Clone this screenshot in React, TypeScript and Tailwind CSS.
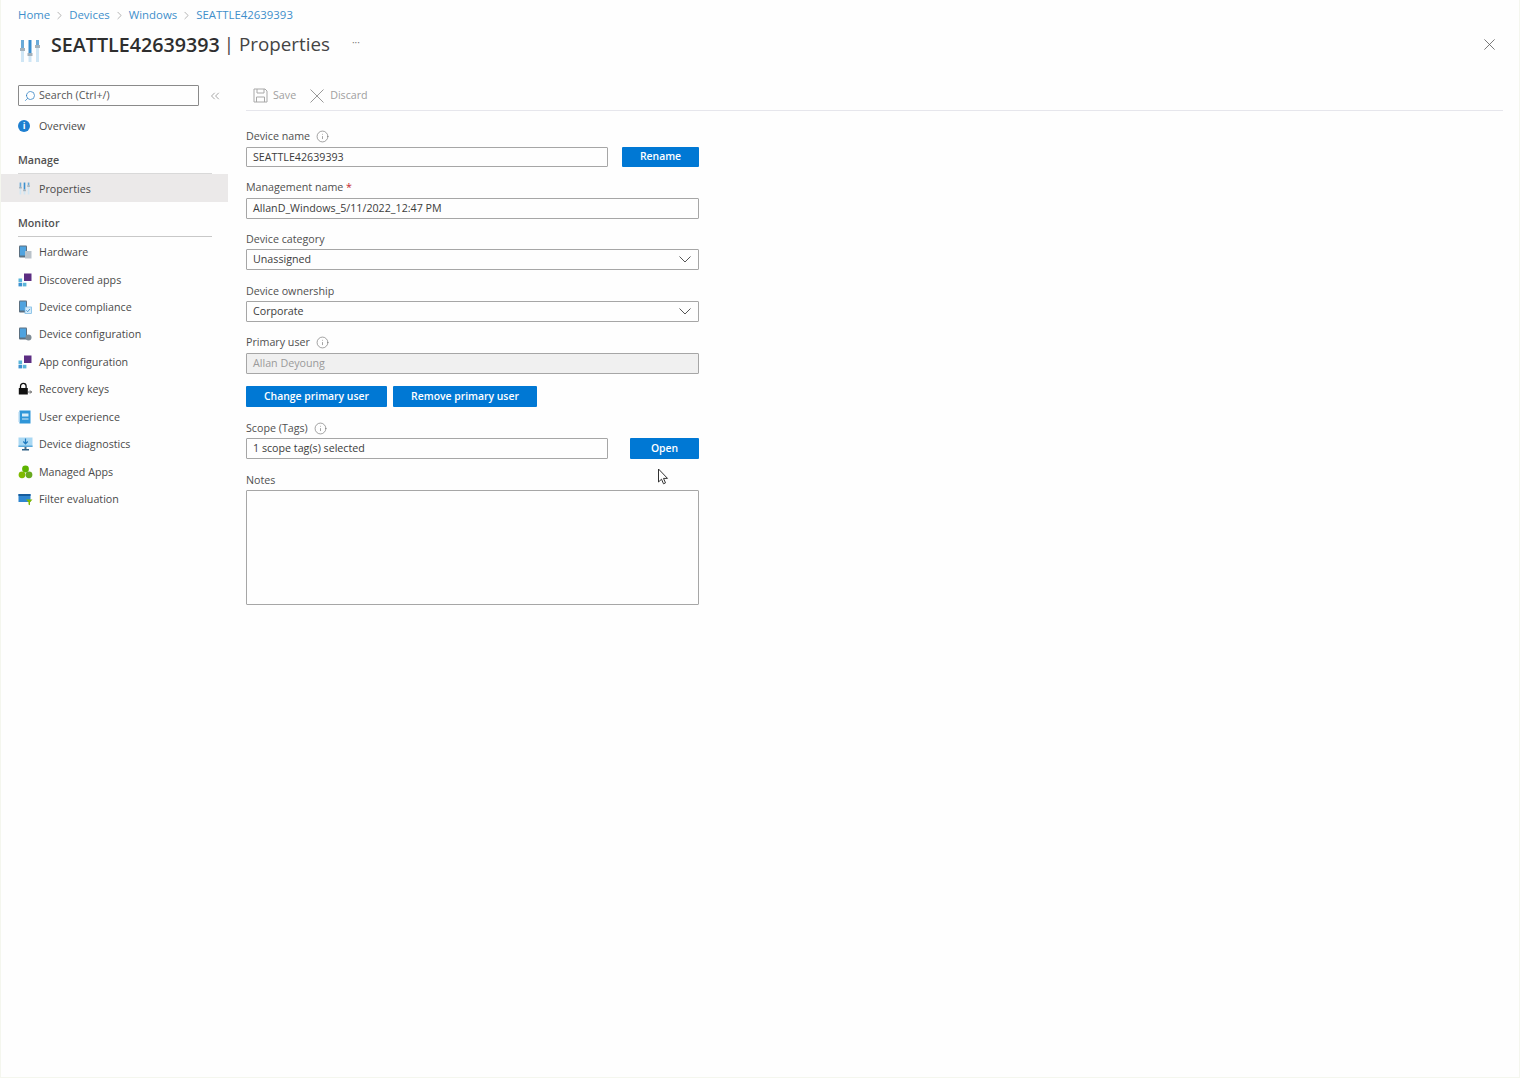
import { ChevronRight, ChevronsLeft, Info, Search } from "lucide-react";
import type { ReactNode } from "react";

function SlidersIcon({ size = 16 }: { size?: number }) {
  return (
    <svg width={size} height={size} viewBox="0 0 24 24">
      <rect x="3" y="1" width="3" height="8" fill="#6aaad8" />
      <rect x="3" y="12" width="3" height="11" fill="#cfe6f5" />
      <rect x="2" y="9" width="5" height="3" fill="#a3b1bb" />
      <rect x="10.5" y="1" width="3" height="13" fill="#3a8fcf" />
      <rect x="10.5" y="17" width="3" height="6" fill="#cfe6f5" />
      <rect x="9.5" y="14" width="5" height="3" fill="#a3b1bb" />
      <rect x="18" y="1" width="3" height="5" fill="#6aaad8" />
      <rect x="18" y="9" width="3" height="14" fill="#cfe6f5" />
      <rect x="17" y="6" width="5" height="3" fill="#a3b1bb" />
    </svg>
  );
}

function CrossIcon({ size, color }: { size: number; color: string }) {
  return (
    <svg width={size} height={size} viewBox="0 0 14 14" fill="none" stroke={color} strokeWidth="1">
      <path d="M0.5 0.5l13 13M13.5 0.5l-13 13" />
    </svg>
  );
}

function DeviceIcon({ badge }: { badge: "grid" | "check" | "gear" }) {
  return (
    <svg width="14" height="14" viewBox="0 0 14 14">
      <rect x="1" y="0.5" width="8" height="12" rx="1" fill="#5b6f80" />
      <rect x="2" y="1.5" width="6" height="9" fill="#4fa3df" />
      {badge === "grid" && <rect x="7" y="6" width="6.5" height="7.5" fill="#b9c2c9" />}
      {badge === "check" && (
        <>
          <rect x="7" y="7" width="6.5" height="6.5" fill="#d5ecfa" stroke="#6db3e2" strokeWidth="0.7" />
          <path d="M8.3 10.3l1.4 1.4 2.4-2.8" fill="none" stroke="#3b8fd0" strokeWidth="0.9" />
        </>
      )}
      {badge === "gear" && <circle cx="10.5" cy="10.5" r="3" fill="#7d8a94" />}
    </svg>
  );
}

function AppsIcon() {
  return (
    <svg width="14" height="14" viewBox="0 0 14 14">
      <rect x="6" y="0.5" width="7.5" height="7.5" fill="#5c2d82" />
      <rect x="0.5" y="5.5" width="3.6" height="3.6" fill="#59b4d9" />
      <rect x="0.5" y="9.8" width="3.6" height="3.6" fill="#3c91d0" />
      <rect x="4.8" y="9.8" width="3.6" height="3.6" fill="#59b4d9" />
    </svg>
  );
}

function LockIcon() {
  return (
    <svg width="14" height="14" viewBox="0 0 14 14">
      <path d="M2.5 6V4.2a2.8 2.8 0 0 1 5.6 0V6" fill="none" stroke="#111" strokeWidth="1.3" />
      <rect x="0.8" y="6" width="9" height="6.5" fill="#111" />
      <path d="M9.5 10h4M12 8.4l1.6 1.6-1.6 1.6" fill="none" stroke="#444" strokeWidth="0.8" />
    </svg>
  );
}

function ExperienceIcon() {
  return (
    <svg width="14" height="14" viewBox="0 0 14 14">
      <rect x="1.5" y="0.5" width="11" height="13" fill="#2f96d8" />
      <rect x="0.5" y="2" width="1.5" height="10" fill="#a9d3ef" />
      <rect x="4" y="3.5" width="6.5" height="3" fill="#d6ecf9" />
      <rect x="4" y="8.5" width="6.5" height="1" fill="#d6ecf9" />
    </svg>
  );
}

function DiagnosticsIcon() {
  return (
    <svg width="15" height="14" viewBox="0 0 15 14">
      <rect x="0.5" y="0.5" width="14" height="9.5" fill="#a9d8f3" />
      <rect x="0.5" y="8.5" width="14" height="1.5" fill="#5aa9dc" />
      <path d="M7.5 1.5v5M5.3 4.5l2.2 2.3 2.2-2.3" fill="none" stroke="#1e79bd" strokeWidth="1.2" />
      <rect x="6.5" y="10" width="2" height="2" fill="#4c6b80" />
      <rect x="4" y="12" width="7" height="1.5" fill="#2d5f84" />
    </svg>
  );
}

function ManagedAppsIcon() {
  return (
    <svg width="15" height="14" viewBox="0 0 15 14">
      <circle cx="7.5" cy="4" r="3.4" fill="#5db300" />
      <circle cx="4" cy="9.8" r="3.4" fill="#7fba00" />
      <circle cx="11" cy="9.8" r="3.4" fill="#68a920" />
    </svg>
  );
}

function FilterIcon() {
  return (
    <svg width="15" height="14" viewBox="0 0 15 14">
      <rect x="0.5" y="2" width="12" height="8" fill="#2f86d0" />
      <rect x="0.5" y="2" width="12" height="2" fill="#175c9c" />
      <path d="M8 7.5h6.5l-2.5 2.7v3l-1.5-.8v-2.2z" fill="#7fba00" />
    </svg>
  );
}

const monitorItems: { label: string; icon: ReactNode }[] = [
  { label: "Hardware", icon: <DeviceIcon badge="grid" /> },
  { label: "Discovered apps", icon: <AppsIcon /> },
  { label: "Device compliance", icon: <DeviceIcon badge="check" /> },
  { label: "Device configuration", icon: <DeviceIcon badge="gear" /> },
  { label: "App configuration", icon: <AppsIcon /> },
  { label: "Recovery keys", icon: <LockIcon /> },
  { label: "User experience", icon: <ExperienceIcon /> },
  { label: "Device diagnostics", icon: <DiagnosticsIcon /> },
  { label: "Managed Apps", icon: <ManagedAppsIcon /> },
  { label: "Filter evaluation", icon: <FilterIcon /> },
];

function NavItem({ label, icon }: { label: string; icon: ReactNode }) {
  return (
    <div className="flex h-[27.45px] items-center pl-[17px] text-[#4a4a4a]">
      <span className="flex w-[21px] shrink-0 items-center">{icon}</span>
      {label}
    </div>
  );
}

function FieldLabel({ children, info }: { children: ReactNode; info?: boolean }) {
  return (
    <div className="flex h-[20px] items-center gap-[6px] text-[#505050]">
      <span>{children}</span>
      {info && <Info size={13} strokeWidth={1.1} className="text-[#666]" />}
    </div>
  );
}

const boxClass = "flex items-center rounded-[1px] border border-[#a6a6a6] px-[6px] text-[#3c3c3c]";
const buttonClass = "flex items-center justify-center rounded-[1px] bg-[#0078d4] text-[10.4px] text-white font-semibold";

function Select({ value }: { value: string }) {
  return (
    <div className={`${boxClass} h-[21px] justify-between`}>
      {value}
      <svg width="12" height="7" viewBox="0 0 12 7" fill="none" stroke="#555" strokeWidth="1" className="mr-[1px]">
        <path d="M0.5 0.5L6 6l5.5-5.5" />
      </svg>
    </div>
  );
}

export default function App() {
  return (
    <div className="relative flex h-[1078px] flex-col overflow-hidden border-x border-b border-[#f4f6ee] bg-[#fefefe] font-['Open_Sans',sans-serif] text-[10.7px]">
      {/* Header */}
      <div className="flex h-[30px] items-center gap-[3px] pl-[17px] text-[11.4px] text-[#3f8fcb]">
        <span>Home</span>
        <ChevronRight size={13} strokeWidth={1} className="text-[#777]" />
        <span>Devices</span>
        <ChevronRight size={13} strokeWidth={1} className="text-[#777]" />
        <span>Windows</span>
        <ChevronRight size={13} strokeWidth={1} className="text-[#777]" />
        <span>SEATTLE42639393</span>
      </div>
      <div className="flex h-[29px] items-center pl-[17px] pr-[24px]">
        <span className="mt-[12px] w-[33px]">
          <SlidersIcon size={24} />
        </span>
        <h1 className="text-[19.7px] leading-none font-semibold text-[#2e2e2e]">SEATTLE42639393</h1>
        <span className="ml-[4px] text-[18.8px] leading-none text-[#444]">| Properties</span>
        <span className="mb-[4px] ml-[22px] text-[10px] text-[#777]">···</span>
        <span className="ml-auto">
          <CrossIcon size={11} color="#555" />
        </span>
      </div>

      <div className="flex flex-1 pt-[25px]">
        {/* Sidebar */}
        <aside className="mt-[1px] w-[227px] shrink-0">
          <div className="flex items-center pl-[17px]">
            <div className="flex h-[21px] w-[181px] items-center gap-[3px] rounded-[1px] border border-[#8a8a8a] pl-[5px] text-[#555]">
              <Search size={12} strokeWidth={1.5} className="-scale-x-100 text-[#2f7fc1]" />
              Search (Ctrl+/)
            </div>
            <ChevronsLeft size={14} strokeWidth={1} className="ml-[9px] text-[#666]" />
          </div>
          <div className="mt-[6px]">
            <NavItem
              label="Overview"
              icon={
                <span className="flex h-[12px] w-[12px] items-center justify-center rounded-full bg-[#1e7fd0] text-[9px] leading-none font-bold text-white">
                  i
                </span>
              }
            />
          </div>
          <div className="mx-[17px] mt-[9px] flex h-[26px] w-[194px] items-center border-b border-[#d9d9d9] pb-[1px] font-semibold text-[#505050]">
            Manage
          </div>
          <div className="flex h-[28px] items-center bg-[#ebe9e9] pl-[17px] pt-[1px] text-[#4a4a4a]">
            <span className="flex w-[21px] items-center">
              <SlidersIcon size={13} />
            </span>
            Properties
          </div>
          <div className="mx-[17px] mt-[9px] flex h-[26px] w-[194px] items-center border-b border-[#c8c8c8] pb-[1px] font-semibold text-[#505050]">
            Monitor
          </div>
          <div className="mt-[1px]">
            {monitorItems.map((item) => (
              <NavItem key={item.label} label={item.label} icon={item.icon} />
            ))}
          </div>
        </aside>

        {/* Content */}
        <main className="ml-[18px] mr-[16px] flex-1">
          <div className="flex h-[27px] items-center border-b border-[#e6e6ec] pb-[3px] text-[#a0a0a0]">
            <svg width="15" height="15" viewBox="0 0 15 15" className="ml-[7px]" fill="none" stroke="#a8a8a8">
              <path d="M1 1h11l2 2v11H1z" />
              <path d="M4 1v4h7V1M3.5 14V9h8v5" />
            </svg>
            <span className="ml-[5px]">Save</span>
            <span className="ml-[14px]">
              <CrossIcon size={14} color="#999" />
            </span>
            <span className="ml-[6px]">Discard</span>
          </div>

          <div className="mt-[15px] w-[453px]">
            <FieldLabel info>Device name</FieldLabel>
            <div className="mt-[1px] flex h-[20px] gap-[14px]">
              <div className={`${boxClass} w-[362px]`}>SEATTLE42639393</div>
              <button className={`${buttonClass} w-[77px]`}>Rename</button>
            </div>

            <div className="mt-[10px] pb-[1px]">
              <FieldLabel>
                Management name <span className="text-[#c4262e]">*</span>
              </FieldLabel>
            </div>
            <div className={`${boxClass} h-[21px]`}>AllanD_Windows_5/11/2022_12:47 PM</div>

            <div className="mt-[10px]">
              <FieldLabel>Device category</FieldLabel>
            </div>
            <Select value="Unassigned" />

            <div className="mt-[11px]">
              <FieldLabel>Device ownership</FieldLabel>
            </div>
            <Select value="Corporate" />

            <div className="mt-[10px] pb-[1px]">
              <FieldLabel info>Primary user</FieldLabel>
            </div>
            <div className={`${boxClass} h-[21px] bg-[#f0f0f0] text-[#9a9a9a]`}>Allan Deyoung</div>

            <div className="mt-[12px] flex h-[21px] gap-[6px]">
              <button className={`${buttonClass} w-[141px]`}>Change primary user</button>
              <button className={`${buttonClass} w-[144px]`}>Remove primary user</button>
            </div>

            <div className="mt-[11px]">
              <FieldLabel info>Scope (Tags)</FieldLabel>
            </div>
            <div className="flex h-[21px] justify-between">
              <div className={`${boxClass} w-[362px]`}>1 scope tag(s) selected</div>
              <button className={`${buttonClass} w-[69px]`}>Open</button>
            </div>

            <div className="mt-[11px]">
              <FieldLabel>Notes</FieldLabel>
            </div>
            <div className="h-[115px] rounded-[1px] border border-[#a6a6a6]" />
          </div>
        </main>
      </div>

      {/* Mouse cursor from the capture */}
      <svg width="12" height="18" viewBox="0 0 12 18" className="absolute left-[656px] top-[468px]">
        <path d="M1.5 1v13l3-2.8 2 4.6 2-.9-2-4.5h4z" fill="#fff" stroke="#333" strokeWidth="1" />
      </svg>
    </div>
  );
}
